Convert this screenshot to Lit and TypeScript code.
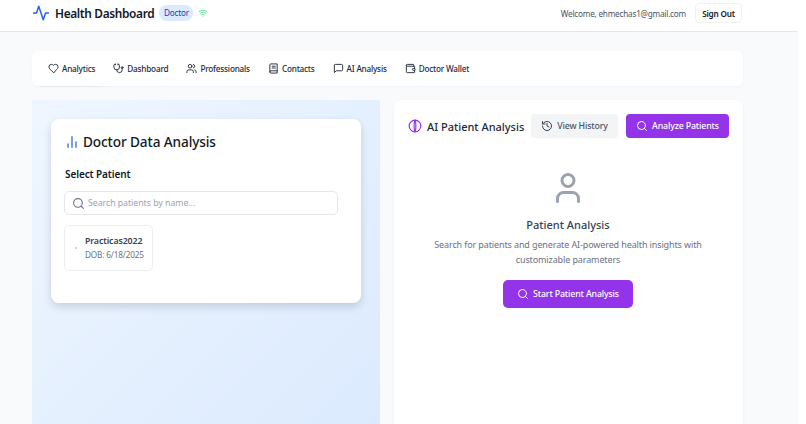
import { LitElement, html, css, svg } from 'lit';
import { customElement } from 'lit/decorators.js';

const icon = (body: unknown, size = 14, cls = '') => html`
  <svg class=${cls} width=${size} height=${size} viewBox="0 0 24 24" fill="none" stroke="currentColor"
    stroke-width="2" stroke-linecap="round" stroke-linejoin="round">${body}</svg>
`;

const search = svg`<circle cx="11" cy="11" r="8"/><path d="m21 21-4.3-4.3"/>`;

const tabs = [
  {
    label: 'Analytics',
    icon: svg`<path d="M19 14c1.5-1.5 3-3.2 3-5.5A5.5 5.5 0 0 0 16.5 3c-1.8 0-3 .5-4.5 2-1.5-1.5-2.7-2-4.5-2A5.5 5.5 0 0 0 2 8.500c0 2.300 1.500 4 3 5.500l7 7Z"/>`,
  },
  {
    label: 'Dashboard',
    icon: svg`<path d="M11 2v2M5 2v2M5 3H4a2 2 0 0 0-2 2v4a6 6 0 0 0 12 0V5a2 2 0 0 0-2-2h-1"/><path d="M8 15a6 6 0 0 0 12 0v-3"/><circle cx="20" cy="10" r="2"/>`,
  },
  {
    label: 'Professionals',
    icon: svg`<path d="M16 21v-2a4 4 0 0 0-4-4H6a4 4 0 0 0-4 4v2"/><circle cx="9" cy="7" r="4"/><path d="M22 21v-2a4 4 0 0 0-3-3.870M16 3.130a4 4 0 0 1 0 7.750"/>`,
  },
  {
    label: 'Contacts',
    icon: svg`<path d="M4 19.500v-15A2.500 2.500 0 0 1 6.500 2H20v20H6.500a2.500 2.500 0 0 1 0-5H20"/><path d="M9 7h7M9 11h7"/>`,
  },
  {
    label: 'AI Analysis',
    icon: svg`<path d="M21 15a2 2 0 0 1-2 2H7l-4 4V5a2 2 0 0 1 2-2h14a2 2 0 0 1 2 2z"/>`,
  },
  {
    label: 'Doctor Wallet',
    icon: svg`<path d="M19 7V4a1 1 0 0 0-1-1H5a2 2 0 0 0 0 4h15a1 1 0 0 1 1 1v4h-3a2 2 0 0 0 0 4h3a1 1 0 0 0 1-1v-2a1 1 0 0 0-1-1"/><path d="M3 5v14a2 2 0 0 0 2 2h15a1 1 0 0 0 1-1v-4"/>`,
  },
];

@customElement('app-root')
export class AppRoot extends LitElement {
  static styles = css`
    :host {
      display: block;
      width: 806px;
      height: 424px;
      overflow: hidden;
      background: #fff;
      font-family: 'Noto Sans', 'Open Sans', sans-serif;
      color: #111827;
    }

    .page {
      width: 798px;
      height: 424px;
      background: #f9fafb;
      overflow: hidden;
    }

    /* Header */
    .header {
      height: 31px;
      background: #fff;
      border-bottom: 1px solid #e5e7eb;
      padding: 0 56px 0 32px;
      display: flex;
      align-items: center;
      justify-content: space-between;
    }

    .brand {
      display: flex;
      align-items: center;
      gap: 5px;
      margin-top: -5px;
    }

    .brand .pulse {
      color: #2563eb;
    }

    .brand h1 {
      margin: 0;
      font-size: 11.900px;
      letter-spacing: -0.35px;
      line-height: 20px;
      font-weight: 600;
    }

    .badge {
      padding: 0 4.500px;
      height: 16px;
      line-height: 16px;
      font-size: 8.200px;
      letter-spacing: -0.2px;
      border-radius: 8px;
      background: #dbeafe;
      color: #1e40af;
    }

    .wifi {
      color: #4ade80;
    }

    .user {
      display: flex;
      align-items: center;
      gap: 9px;
      margin-top: -5px;
    }

    .user span {
      font-size: 8.200px;
      letter-spacing: -0.22px;
      color: #4b5563;
    }

    .signout {
      width: 47px;
      height: 20px;
      padding: 0;
      border: 1px solid #f0f1f3;
      border-radius: 4px;
      background: #fff;
      font: 600 8.200px 'Noto Sans', sans-serif;
      letter-spacing: -0.2px;
      color: #111827;
    }

    /* Abas */
    .tabs {
      margin: 19px 55px 0 32px;
      height: 35px;
      background: #fff;
      border-radius: 6px;
      box-shadow: 0 1px 2px rgba(0, 0, 0, 0.04);
      padding: 0 7px;
      display: flex;
      align-items: center;
    }

    .tab {
      display: flex;
      align-items: center;
      gap: 3px;
      height: 35px;
      padding: 0 9px;
      font-size: 8.200px;
      letter-spacing: -0.2px;
      font-weight: 500;
      color: #1f2937;
      white-space: nowrap;
    }

    .tab.active {
      box-shadow: 0 1px 1px rgba(0, 0, 0, 0.05);
      border-radius: 4px;
    }

    /* Colunas */
    .columns {
      margin: 14px 55px 0 32px;
      display: grid;
      grid-template-columns: 348px 349px;
      gap: 14px;
      height: 340px;
    }

    .left {
      background: linear-gradient(135deg, #eff6ff, #dbeafe);
      padding: 19px 19px 0;
    }

    .card {
      background: #fff;
      border-radius: 8px;
      height: 184px;
      padding: 13px 14px 0 13px;
      box-sizing: border-box;
      box-shadow: 0 4px 8px rgba(0, 0, 0, 0.14);
    }

    .card h2 {
      display: flex;
      align-items: center;
      gap: 3px;
      margin: 0;
      font-size: 13.600px;
      letter-spacing: -0.1px;
      line-height: 20px;
      font-weight: 500;
      color: #111827;
    }

    .card h2 svg {
      color: #3b6fe0;
    }

    .card h3 {
      margin: 15px 0 0 1px;
      font-size: 10px;
      letter-spacing: -0.1px;
      line-height: 14px;
      font-weight: 600;
    }

    .search {
      margin-top: 10px;
      width: 274px;
      height: 24px;
      box-sizing: border-box;
      border: 1px solid #e5e7eb;
      border-radius: 5px;
      padding: 0 7px;
      display: flex;
      align-items: center;
      gap: 3px;
      font-size: 8.700px;
      color: #9ca3af;
    }

    .search svg {
      color: #6b7280;
    }

    .patient {
      margin-top: 10px;
      width: 89px;
      height: 46px;
      box-sizing: border-box;
      border: 1px solid #eceef1;
      border-radius: 5px;
      padding-left: 20px;
      display: flex;
      flex-direction: column;
      justify-content: center;
      position: relative;
    }

    .patient .dot {
      position: absolute;
      left: 10px;
      top: 21px;
      width: 2px;
      height: 2px;
      background: #d1d5db;
    }

    .patient b {
      font-size: 8.800px;
      letter-spacing: -0.1px;
      line-height: 13px;
      font-weight: 600;
      color: #374151;
    }

    .patient small {
      font-size: 8.200px;
      letter-spacing: -0.15px;
      line-height: 13px;
      color: #6b7280;
    }

    .right {
      background: #fff;
      border-radius: 8px 8px 0 0;
      padding: 14px 14px 0;
      box-shadow: 0 1px 3px rgba(0, 0, 0, 0.06);
    }

    .right-head {
      display: flex;
      align-items: center;
      justify-content: space-between;
    }

    .right-head h2 {
      display: flex;
      align-items: center;
      gap: 5px;
      margin: 0;
      font-size: 11px;
      font-weight: 500;
      color: #1f2937;
      white-space: nowrap;
    }

    .right-head h2 svg {
      color: #9333ea;
    }

    .btn {
      display: flex;
      flex: none;
      align-items: center;
      justify-content: center;
      gap: 4px;
      border: 0;
      padding: 0;
      border-radius: 4px;
      font: 500 8.800px 'Noto Sans', sans-serif;
      letter-spacing: -0.15px;
      white-space: nowrap;
    }

    .actions {
      display: flex;
      gap: 8px;
    }

    .btn.ghost {
      width: 87px;
      height: 24px;
      background: #f3f4f6;
      color: #4b5563;
    }

    .btn.ghost svg {
      color: #374151;
    }

    .btn.primary {
      background: #9333ea;
      color: #fff;
    }

    .head-primary {
      width: 103px;
      height: 24px;
    }

    .empty {
      margin: 32px 1px 0 0;
      display: flex;
      flex-direction: column;
      align-items: center;
      text-align: center;
    }

    .empty > svg {
      color: #9ca3af;
    }

    .empty h3 {
      margin: 11px 0 0;
      font-size: 11px;
      line-height: 16px;
      font-weight: 500;
      color: #374151;
    }

    .empty p {
      margin: 5px 0 0;
      width: 300px;
      font-size: 9px;
      letter-spacing: -0.12px;
      line-height: 14.500px;
      color: #6b7280;
    }

    .start {
      width: 130px;
      height: 28px;
      margin-top: 13px;
      border-radius: 5px;
    }
  `;

  render() {
    return html`
      <div class="page">
        <header class="header">
          <div class="brand">
            ${icon(svg`<path d="M22 12h-4l-3 9L9 3l-3 9H2"/>`, 18, 'pulse')}
            <h1>Health Dashboard</h1>
            <span class="badge">Doctor</span>
            ${icon(
              svg`<path d="M2 8.820a15 15 0 0 1 20 0M5 12.860a10 10 0 0 1 14 0M8.500 16.430a5 5 0 0 1 7 0M12 20h.01"/>`,
              10,
              'wifi',
            )}
          </div>
          <div class="user">
            <span>Welcome, ehmechas1@gmail.com</span>
            <button class="signout">Sign Out</button>
          </div>
        </header>

        <nav class="tabs">
          ${tabs.map(
            (t, i) => html`<div class="tab ${i === 0 ? 'active' : ''}">${icon(t.icon, 11)}${t.label}</div>`,
          )}
        </nav>

        <main class="columns">
          <section class="left">
            <div class="card">
              <h2>
                ${icon(svg`<path d="M18 20v-8M12 20V4M6 20v-5"/>`, 16)}
                Doctor Data Analysis
              </h2>
              <h3>Select Patient</h3>
              <div class="search">${icon(search, 13)}Search patients by name...</div>
              <div class="patient">
                <i class="dot"></i>
                <b>Practicas2022</b>
                <small>DOB: 6/18/2025</small>
              </div>
            </div>
          </section>

          <section class="right">
            <div class="right-head">
              <h2>
                ${icon(svg`<circle cx="12" cy="12" r="10"/><path d="M12 2c-2 3-2 17 0 20M12 2c2 3 2 17 0 20"/>`, 14)}
                AI Patient Analysis
              </h2>
              <div class="actions">
                <button class="btn ghost">
                  ${icon(svg`<path d="M3 12a9 9 0 1 0 9-9 9.750 9.750 0 0 0-6.740 2.740L3 8"/><path d="M3 3v5h5M12 7v5l4 2"/>`, 12)}
                  View History
                </button>
                <button class="btn primary head-primary">${icon(search, 12)}Analyze Patients</button>
              </div>
            </div>
            <div class="empty">
              ${icon(svg`<path d="M19 21v-2a4 4 0 0 0-4-4H9a4 4 0 0 0-4 4v2"/><circle cx="12" cy="7" r="4"/>`, 36)}
              <h3>Patient Analysis</h3>
              <p>Search for patients and generate AI-powered health insights with customizable parameters</p>
              <button class="btn primary start">${icon(search, 12)}Start Patient Analysis</button>
            </div>
          </section>
        </main>
      </div>
    `;
  }
}
